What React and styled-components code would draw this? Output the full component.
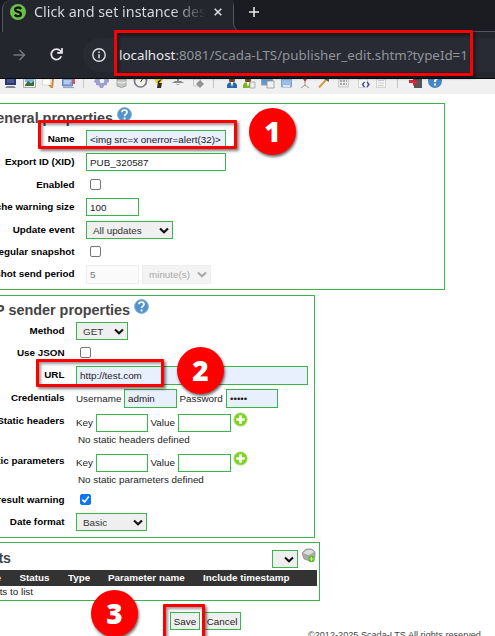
import React from 'react';
import styled, { createGlobalStyle, css } from 'styled-components';

const Global = createGlobalStyle`
  * { box-sizing: border-box; }
  html, body { margin: 0; overflow: hidden; background: #fff; }
  svg { display: block; flex: none; }
`;
const Page = styled.div`
  position: relative; width: 495px; height: 636px; overflow: hidden;
  background: #fff; color: #111; font: 9.85px/12px "Liberation Sans", Arial, sans-serif;
`;

/* browser */
const TabStrip = styled.div`
  display: flex; height: 32px; background: #1b1c21; color: #e4e4e8;
`;
const Tab = styled.div`
  display: flex; align-items: center; width: 231px; height: 32px; margin-left: 2px; padding: 0 9px 8px 7px;
  background: #24262e; border: solid #55575e; border-width: 0 0 0 1px; border-radius: 9px 0 0 0;
`;
const TabTitle = styled.div`
  width: 172px; margin-left: 8px; overflow: hidden; white-space: nowrap;
  font: 14.35px/22px "Noto Sans", sans-serif;
  color: transparent; background: linear-gradient(90deg, #dedfe3 138px, #24262e 172px);
  background-clip: text; -webkit-background-clip: text;
`;
const TabClose = styled.svg` margin-left: 8px; `;
const StripRest = styled.div`
  flex: 1; padding: 6px 0 0 8px; border-bottom: 1px solid #55575e;
`;
const AddressBar = styled.div`
  display: flex; align-items: center; height: 47px; padding: 0 0 1px 13px;
  background: #24262e; border-bottom: 1px solid #07080a;
`;
const Reload = styled.svg` margin: 0 24px; `;
const Url = styled.div`
  display: flex; align-items: center; flex: 1; height: 34px; margin-left: -4px; padding-left: 9px;
  border-radius: 17px 0 0 17px; background: #282a34; color: #92949a; white-space: nowrap;
  font: 13.35px/22px "Noto Sans", sans-serif;
  b { font-weight: 400; color: #e6e7ea; }
  span { margin-left: 13px; }
`;

/* application */
const IconStrip = styled.div` height: 15px; background: #f0f0f0; overflow: hidden; `;
const Panel = styled.section`
  width: ${p => p.$w}px; height: ${p => p.$h}px; margin-top: ${p => p.$gap}px;
  border: 1px solid #39b54a; border-left: 0; overflow: hidden;
`;
const Heading = styled.h2`
  display: flex; justify-content: flex-end; gap: 4px; width: ${p => p.$w}px; height: 26px; margin: 0; padding-top: 6px;
  font-size: 14.4px; line-height: 16px; color: #444; white-space: nowrap;
  svg { margin-top: -3px; }
`;
const Row = styled.div` display: flex; align-items: flex-start; height: ${p => p.$h}px; `;
const Label = styled.label`
  display: flex; justify-content: flex-end; flex: none; width: ${p => p.$w}px; margin-right: 11.5px;
  padding-top: ${p => p.$top ?? 3}px; font-weight: 700; white-space: nowrap; color: #000;
`;
const box = css`
  flex: none; height: ${p => p.$h || 18}px; width: ${p => p.$w}px;
  border: 1px solid ${p => (p.$off ? '#eee' : '#39b54a')}; line-height: ${p => (p.$h || 18) - 1}px;
  color: ${p => (p.$off ? '#777' : '#222')}; white-space: nowrap;
`;
const Field = styled.div`
  ${box}
  padding: 0 0 0 3px;
  background: ${p => (p.$fill ? '#e8effd' : p.$off ? '#fafafa' : '#fff')};
`;
const SelectBox = styled.div`
  ${box}
  display: flex; justify-content: space-between; align-items: center; padding: 0 3px 0 6px;
  background: ${p => (p.$off ? '#f3f3f3' : '#efefef')}; color: ${p => (p.$off ? '#aaa' : '#333')};
  margin-left: ${p => p.$ml || 0}px;
`;
const Check = styled.span`
  display: block; flex: none; width: 11px; height: 11px; margin: 3px 0 0 4px; border-radius: 2px;
  border: 1px solid ${p => (p.$on ? '#0b75f5' : '#767676')}; background: ${p => (p.$on ? '#0b75f5' : '#fff')};
`;
const Caption = styled.span`
  flex: none; width: ${p => p.$w}px; padding-top: ${p => p.$top ?? 4}px; margin-left: ${p => p.$ml || 0}px; white-space: nowrap; color: #222;
`;
const Note = styled.div` height: ${p => p.$h}px; padding-left: 78px; color: #222; `;
const PlusSlot = styled.div` margin: ${p => p.$top}px 0 0 2px; `;
const ListTop = styled.div`
  display: flex; height: 27px; align-items: flex-start; padding-top: 7px;
`;
const AddPoint = styled.svg` margin: -2px 0 0 3px; `;
const ListTitle = styled.h2`
  display: flex; flex: none; width: 272px; margin: 0; font-size: 14.2px; line-height: 17px; color: #444;
`;
const ListHead = styled.div`
  display: grid; grid-template-columns: 19.5px 48.5px 40px 95px 114px; align-items: center;
  width: 317px; height: 16px; background: #333; color: #fff; font-weight: 700; white-space: nowrap;
`;
const ListRow = styled.div` color: #222; line-height: 12px; `;
const EndAt = styled.span`
  display: flex; justify-content: flex-end; width: ${p => p.$x}px; white-space: nowrap;
`;
const Actions = styled.div` display: flex; gap: 3px; margin: 11px 0 0 170px; `;
const Button = styled.div`
  ${box}
  background: #efefef; text-align: center;
`;
const Footer = styled.footer` margin: -1px 0 0 308px; font-size: 9.15px; color: #444; white-space: nowrap; `;

/* annotations */
const Mark = styled.div`
  position: absolute; left: ${p => p.$x}px; top: ${p => p.$y}px; width: ${p => p.$w}px; height: ${p => p.$h}px;
  border: 3px solid #f00; border-radius: 1px;
  box-shadow: 2px 2px 3px rgba(0,0,0,.5), inset 2px 2px 3px rgba(0,0,0,.4);
`;
const Badge = styled.div`
  position: absolute; left: ${p => p.$x}px; top: ${p => p.$y}px; width: 47px; height: 47px; border-radius: 50%;
  background: #f00; color: #fff; font: 800 28px/47px "Open Sans", sans-serif; text-align: center;
  box-shadow: 1px 2px 3px rgba(0,0,0,.6);
`;

const Chevron = ({ c = '#111' }) => (
  <svg width="10" height="7" viewBox="0 0 10 7"><path d="M1 1.4 5 5.3 9 1.4" fill="none" stroke={c} strokeWidth="2.1" /></svg>
);
const Select = ({ children, off, ...p }) => (
  <SelectBox $off={off} {...p}><span>{children}</span><Chevron c={off ? '#aaa' : undefined} /></SelectBox>
);
const Help = () => (
  <svg width="15" height="15" viewBox="0 0 15 15">
    <circle cx="7.5" cy="7.5" r="6.9" fill="#5293cb" stroke="#81add2" />
    <path d="M4.9 5.3C5 2.3 10 2.2 10 5.2 10 7 7.6 7.1 7.6 9" fill="none" stroke="#fff" strokeWidth="1.7" />
    <circle cx="7.6" cy="11.4" r="1.1" fill="#fff" />
  </svg>
);
const Plus = () => (
  <svg width="15" height="15" viewBox="0 0 15 15">
    <circle cx="7.5" cy="7.5" r="6.6" fill="#7ed321" stroke="#a4dc6c" />
    <path d="M7.5 3.3v8.4M3.3 7.5h8.4" stroke="#fff" strokeWidth="2.6" />
  </svg>
);
const Tick = () => (
  <svg width="9" height="9" viewBox="0 0 9 9"><path d="M1.3 4.6 3.6 7 7.800 1.500" fill="none" stroke="#fff" strokeWidth="1.600" /></svg>
);
const PointIcon = () => (
  <AddPoint width="16" height="15" viewBox="0 0 16 15">
    <path d="M1 5l4-4h6l3 3v5l-5 4-6-2z" fill="#aaa" stroke="#888" strokeWidth=".7" /><path d="M2 5l4-3h5l2 2-5 3z" fill="#ddd" />
    <circle cx="10.500" cy="11" r="3.300" fill="#65bc27" /><path d="M10.500 9v4M8.500 11h4" stroke="#c1eea2" />
  </AddPoint>
);

const Person = ({ x, c }) => (
  <g><circle cx={x} cy="1" r="3" fill="#7a4a25" /><path d={`M${x - 5} 9V6q1-3 5-3t5 3v3z`} fill={c} /><path d={`M${x - 1.5} 3h3L${x} 8z`} fill="#fff" /></g>
);
const Strip = () => (
  <svg width="495" height="15" viewBox="0 0 495 15">
    <path d="M5 0h11v6H5z" fill="#2c3674" /><path d="M7 0h7v4H7z" fill="#4c548e" /><path d="M7 7h7l2 2H5z" fill="#868686" />
    <path d="M23.500 0h12v8.500h-12z" fill="#f7f7f7" stroke="#aaa" /><path d="M25 0h9v3h-9z" fill="#76b6df" /><path d="M25 6l3-4 3 2 3-2v5h-9z" fill="#386e37" />
    <path d="M43 0h8l-1 6h-8z" fill="#fcfcf8" stroke="#ccc" strokeWidth=".7" /><path d="M52 0h2l-1 9h-2zM48 6h3v3z" fill="#c78a38" />
    <path d="M62.500 0h10v7h-10z" fill="#84a5dd" stroke="#6d83b7" /><path d="M64 2h7M64 4h6" stroke="#e8f0ff" /><path d="M72 0h3v5h-3z" fill="#c85a6a" /><path d="M63 8.600h11" stroke="#93a0bd" />
    <path d="M83.500 0v9M213.500 0v9M397.500 0v9" stroke="#c4c4c4" />
    <path d="M95 0h14v3l-2 1v2l-3 .5-1 2.500h-3l-1-2.500-3-.5V4l-2-1z" fill="#9a9fcd" /><circle cx="102" cy="2" r="2.300" fill="#f0f0f0" />
    <path d="M117 0h9v7q-4.500 3-9 0z" fill="#c4c8c4" stroke="#959995" strokeWidth=".8" /><path d="M117 3q4.500 2 9 0" stroke="#eee" fill="none" />
    <circle cx="140.500" cy="2" r="6" fill="#f2f2e8" stroke="#77788a" strokeWidth="1.700" /><path d="M140.500 3l2-3" stroke="#333" />
    <path d="M154 0h9l-2 4h-5z" fill="#e9d527" /><path d="M158 2l-1 7h4l1-5h-3l3-4z" fill="#33301c" />
    <path d="M172 4h12l-3-2h-2V0h-2v2h-2zM176 5h4l-2 1z" fill="#888" />
    <path d="M193.500 0h7v7h-7z" fill="#eee" stroke="#ccc" /><path d="M200 1l4 4-4 4-4-4z" fill="#929292" />
    <Person x={232} c="#2968ac" /><Person x={248} c="#79b51d" /><path d="M250 3h5v6h-5z" fill="#eee" stroke="#999" strokeWidth=".7" />
    <path d="M261.500 0h11v6h-11z" fill="#6595cd" stroke="#8da3bd" /><path d="M267 2h7v7h-7z" fill="#f2f2ec" stroke="#888" strokeWidth=".7" />
    <path d="M281.500 0h10v8h-10z" fill="#9bbce9" stroke="#7f9dc9" /><path d="M283 6h7v2h-7z" fill="#dce5ef" />
    <path d="M305 1v6M301 9l4-3 4 3" stroke="#999" fill="none" /><path d="M303 0h4l-2 3z" fill="#d43b3b" />
    <path d="M319 8.500 326 1" stroke="#db9b42" strokeWidth="2" /><path d="M324 0h5v3z" fill="#666" />
    <path d="M338.500 0h10v8h-10z" fill="#eaeaea" stroke="#ccc" /><path d="M340 2h7M340 5h7" stroke="#666" strokeDasharray="2 1" />
    <path d="M358.500 0h9v8.500h-9z" fill="#f5f5f5" stroke="#d2d2d2" /><path d="M364.500 3l-2 2.500 2 2.500M367 3l2 2.500-2 2.500" stroke="#4545a0" fill="none" strokeWidth="1.300" />
    <path d="M376.500 0h9v8.500h-9z" fill="#f5f5f5" stroke="#d2d2d2" /><path d="M378 1.500h6M378 4h6M378 6.500h6" stroke="#ccc" />
    <path d="M414 0h8v9h-8z" fill="#555" /><path d="M409 1h4V-1l5 4-5 4V4h-4z" fill="#d9263c" />
    <circle cx="435" cy="2" r="7" fill="#4588c5" /><path d="M435 3V1.500l2-2M435 4.500v2" stroke="#fff" strokeWidth="2" />
  </svg>
);

export default function App() {
  return (
    <Page>
      <Global />
      <TabStrip>
        <Tab>
          <svg width="16" height="16" viewBox="0 0 16 16">
            <circle cx="8" cy="8" r="8" fill="#6bbf4b" />
            <path d="M11.200 5C9.500 2.700 5 3.200 5.200 5.800 5.500 8.400 10.800 7.300 10.900 10 11 12.700 6.400 13 4.700 10.700" fill="none" stroke="#10150e" strokeWidth="2.300" />
          </svg>
          <TabTitle>Click and set instance des</TabTitle>
          <TabClose width="8" height="8" viewBox="0 0 8 8"><path d="M.7.700l6.600 6.600M7.300.700.700 7.300" stroke="#e2e2e4" strokeWidth="1.500" /></TabClose>
        </Tab>
        <svg width="7" height="32" viewBox="0 0 7 32">
          <path d="M0 0v32h7v-.5Q.5 30 .5 22V7Q.5 2-2 0z" fill="#24262e" />
          <path d="M-2 0Q.5 2 .5 7v15q0 8 6.500 9.500" fill="none" stroke="#55575e" />
        </svg>
        <StripRest>
          <svg width="12" height="12" viewBox="0 0 12 12"><path d="M6 1v10M1 6h10" stroke="#eee" strokeWidth="1.500" /></svg>
        </StripRest>
      </TabStrip>
      <AddressBar>
        <svg width="13" height="12" viewBox="0 0 13 12"><path d="M.5 6h11M6.500 1l5 5-5 5" fill="none" stroke="#74767d" strokeWidth="1.500" /></svg>
        <Reload width="13" height="13" viewBox="0 0 13 13"><path d="M11.300 8.300A5.200 5.200 0 1 1 10.500 3L12 4.500M12 0v4.800H7.200" fill="none" stroke="#e8e8eb" strokeWidth="1.700" /></Reload>
        <Url>
          <svg width="14" height="14" viewBox="0 0 14 14"><circle cx="7" cy="7" r="6.200" fill="none" stroke="#e0e0e4" strokeWidth="1.400" /><path d="M7 6.300v4M7 3.400v1.500" stroke="#e0e0e4" strokeWidth="1.500" /></svg>
          <span><b>localhost</b>:8081/Scada-LTS/publisher_edit.shtm?typeId=1</span>
        </Url>
      </AddressBar>
      <IconStrip><Strip /></IconStrip>

      <Panel $w={445} $h={187} $gap={9}>
        <Heading $w={132}>General properties <Help /></Heading>
        <Row $h={23}><Label $w={74.5}>Name</Label><Field $w={140} $fill>&lt;img src=x onerror=alert(32)&gt;</Field></Row>
        <Row $h={23}><Label $w={74.5}>Export ID (XID)</Label><Field $w={140}>PUB_320587</Field></Row>
        <Row $h={22}><Label $w={74.5}>Enabled</Label><Check /></Row>
        <Row $h={23}><Label $w={74.5}>Cache warning size</Label><Field $w={53}>100</Field></Row>
        <Row $h={22}><Label $w={74.5}>Update event</Label><Select $w={87}>All updates</Select></Row>
        <Row $h={22}><Label $w={74.5}>Send regular snapshot</Label><Check /></Row>
        <Row $h={22}><Label $w={74.5}>Snapshot send period</Label><Field $w={53} $h={19} $off>5</Field><Select $w={69} $h={19} $ml={3} off>minute(s)</Select></Row>
      </Panel>

      <Panel $w={315} $h={243} $gap={5}>
        <Heading $w={149}>HTTP sender properties <Help /></Heading>
        <Row $h={22}><Label $w={64.5}>Method</Label><Select $w={52}>GET</Select></Row>
        <Row $h={22}><Label $w={64.5}>Use JSON</Label><Check /></Row>
        <Row $h={23}><Label $w={64.5}>URL</Label><Field $w={232} $h={19} $fill>http://test.com</Field></Row>
        <Row $h={25}><Label $w={64.5}>Credentials</Label><Caption $w={48}>Username</Caption><Field $w={53} $h={19} $fill>admin</Field><Caption $w={46.5} $ml={2.5}>Password</Caption><Field $w={52} $h={19} $fill>•••••</Field></Row>
        <Row $h={20}><Label $w={64.5} $top={1}>Static headers</Label><Caption $w={20} $top={3}>Key</Caption><Field $w={52} /><Caption $w={27.5} $ml={2.5} $top={3}>Value</Caption><Field $w={53} /><PlusSlot $top={-2}><Plus /></PlusSlot></Row>
        <Note $h={20}>No static headers defined</Note>
        <Row $h={20}><Label $w={64.5} $top={1}>Static parameters</Label><Caption $w={20} $top={3}>Key</Caption><Field $w={52} /><Caption $w={27.5} $ml={2.5} $top={3}>Value</Caption><Field $w={53} /><PlusSlot $top={-3}><Plus /></PlusSlot></Row>
        <Note $h={17}>No static parameters defined</Note>
        <Row $h={22}><Label $w={64.5}>Set bad result warning</Label><Check $on><Tick /></Check></Row>
        <Row $h={22}><Label $w={64.5}>Date format</Label><Select $w={71}>Basic</Select></Row>
      </Panel>

      <Panel $w={320} $h={59} $gap={4}>
        <ListTop><ListTitle><EndAt $x={11}>Points</EndAt></ListTitle><Select $w={26} /><PointIcon /></ListTop>
        <ListHead><EndAt $x={1}>Name</EndAt><span>Status</span><span>Type</span><span>Parameter name</span><span>Include timestamp</span></ListHead>
        <ListRow><EndAt $x={33}>No points to list</EndAt></ListRow>
      </Panel>
      <Actions><Button $w={30}>Save</Button><Button $w={38}>Cancel</Button></Actions>
      <Footer>©2012-2025 Scada-LTS All rights reserved.</Footer>

      <Mark $x={114} $y={30} $w={359} $h={46} />
      <Mark $x={38} $y={120} $w={199} $h={29} />
      <Mark $x={36} $y={359} $w={128} $h={28} />
      <Mark $x={163} $y={604} $w={42} $h={36} />
      <Badge $x={249} $y={108}>1</Badge>
      <Badge $x={177} $y={347}>2</Badge>
      <Badge $x={91} $y={590}>3</Badge>
    </Page>
  );
}
